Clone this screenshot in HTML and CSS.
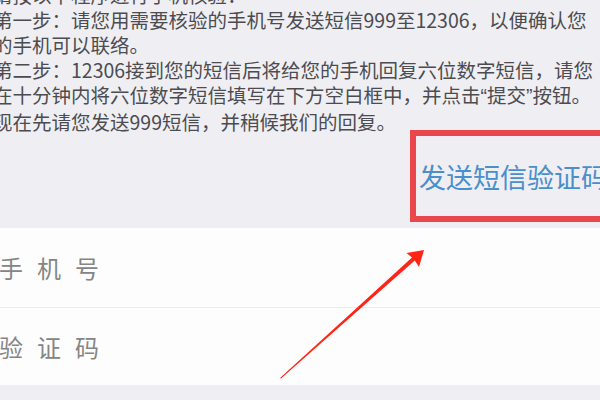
FILE: index.html
```
<!DOCTYPE html>
<html>
<head>
  <meta charset="utf-8">
  <meta name="viewport" content="width=device-width, initial-scale=1.0">
  <title>手机核验</title>
  <link rel="stylesheet" href="styles.css">
</head>
<body>
  <div class="page">
    <!-- Instructions -->
    <div class="notice">
      <div>请按以下程序进行手机核验：</div>
      <div>第一步：请您用需要核验的手机号发送短信999至12306，以便确认您</div>
      <div>的手机可以联络。</div>
      <div>第二步：12306接到您的短信后将给您的手机回复六位数字短信，请您</div>
      <div>在十分钟内将六位数字短信填写在下方空白框中，并点击<span class="q">“</span>提交<span class="q">”</span>按钮。</div>
      <div>现在先请您发送999短信，并稍候我们的回复。</div>
    </div>

    <!-- Send button, highlighted -->
    <div class="send-row">
      <div class="send-box">发送短信验证码</div>
    </div>

    <!-- Form -->
    <div class="form">
      <div class="field">手机号</div>
      <div class="field">验证码</div>
    </div>

    <!-- Annotation arrow -->
    <svg class="arrow" width="600" height="400" viewBox="0 0 600 400">
      <polygon points="280,378 412,257.5 406.5,253 424,250 419,267 414.8,260.5 281,378.5" fill="#ff2416"/>
    </svg>
  </div>
</body>
</html>
```

FILE: styles.css
```
html, body {
  margin: 0;
  padding: 0;
}

body {
  font-family: "Noto Sans CJK SC", "Noto Sans", sans-serif;
  background-color: #efeff3;
  width: 600px;
  height: 400px;
  overflow: hidden;
}

.page {
  position: relative;
  width: 600px;
  height: 400px;
  overflow: hidden;
}

.notice {
  height: 150px;
  margin-top: -18px;
  margin-left: -7px;
  font-size: 19.5px;
  line-height: 25px;
  color: #4c4c50;
  white-space: nowrap;
}

.notice .q {
  font-family: "Liberation Sans", sans-serif;
}

.send-row {
  display: flex;
  margin-top: -2px;
  padding-left: 410px;
}

.send-box {
  box-sizing: border-box;
  width: 200px;
  height: 92px;
  border: 6px solid #e9474c;
  border-right: none;
  display: flex;
  align-items: center;
  padding-left: 3px;
  font-size: 27px;
  color: #4a8ecb;
  white-space: nowrap;
  overflow: hidden;
}

.form {
  margin-top: 6px;
  background-color: #fdfdfd;
}

.field {
  height: 79px;
  display: flex;
  align-items: center;
  font-size: 24px;
  letter-spacing: 14px;
  color: #858585;
  margin-left: -1px;
}

.field + .field {
  border-top: 1px solid #ececee;
  height: 77px;
}

.arrow {
  position: absolute;
  left: 0;
  top: 0;
}
```
